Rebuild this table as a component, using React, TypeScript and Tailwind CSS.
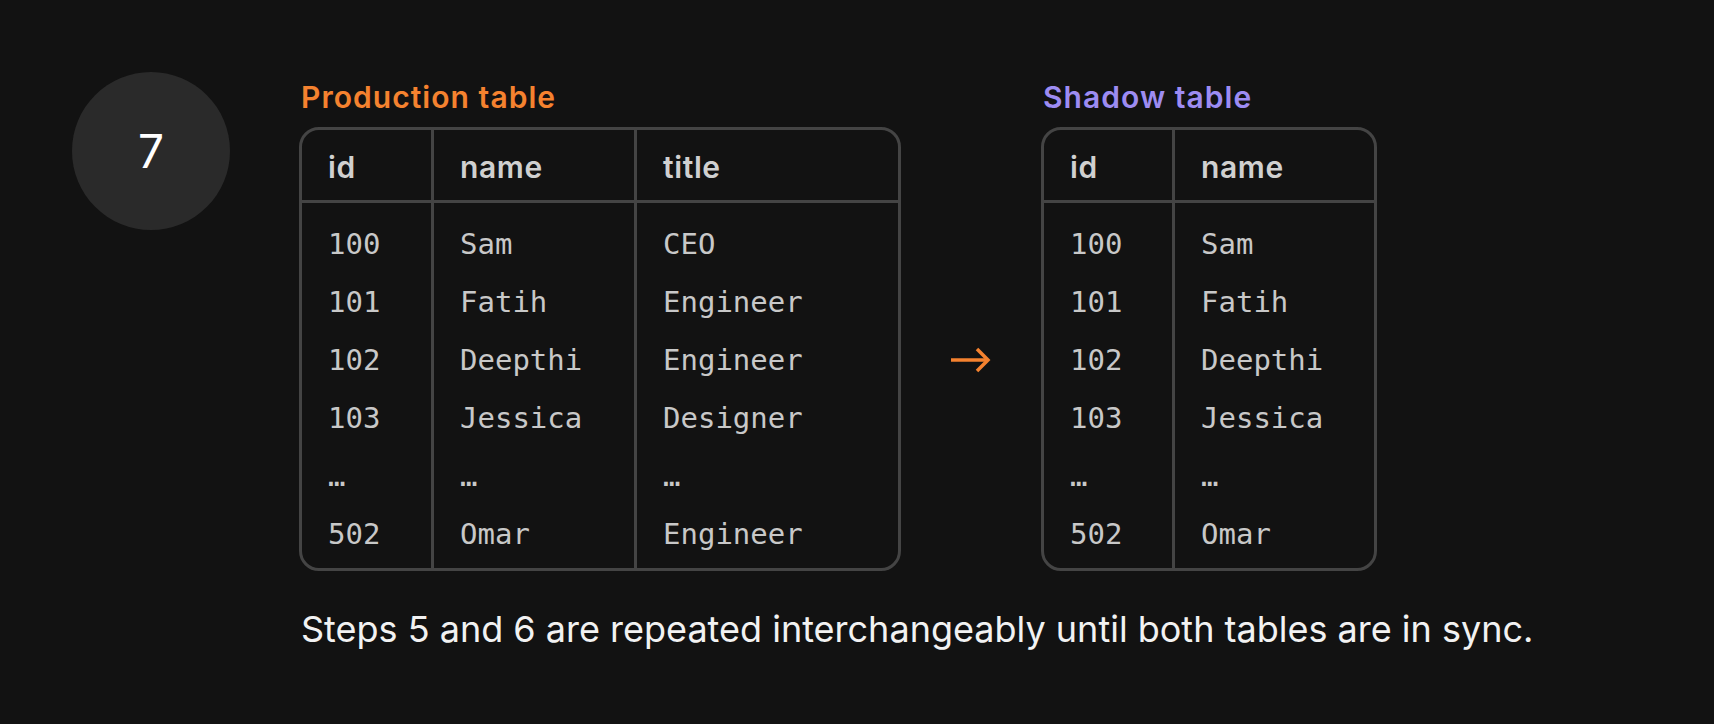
import React from "react";

type Column = {
  key: string;
  width: string;
  cells: string[];
};

const productionColumns: Column[] = [
  { key: "id", width: "w-[132px]", cells: ["100", "101", "102", "103", "…", "502"] },
  { key: "name", width: "w-[203px]", cells: ["Sam", "Fatih", "Deepthi", "Jessica", "…", "Omar"] },
  { key: "title", width: "w-[261px]", cells: ["CEO", "Engineer", "Engineer", "Designer", "…", "Engineer"] },
];

const shadowColumns: Column[] = [
  { key: "id", width: "w-[131px]", cells: ["100", "101", "102", "103", "…", "502"] },
  { key: "name", width: "w-[199px]", cells: ["Sam", "Fatih", "Deepthi", "Jessica", "…", "Omar"] },
];

function DataTable({ label, labelColor, columns }: { label: string; labelColor: string; columns: Column[] }) {
  return (
    <div className="flex flex-col">
      <div
        className={`text-[30px] leading-[34px] font-semibold tracking-[0.035em] pl-[2px] ${labelColor}`}
        style={{ fontFamily: "Inter, 'Noto Sans', sans-serif" }}
      >
        {label}
      </div>
      <div className="mt-[13px] flex border-[3px] border-[#444444] rounded-[20px] overflow-hidden">
        {columns.map((col, i) => (
          <div
            key={col.key}
            className={`${col.width} flex flex-col ${i < columns.length - 1 ? "border-r-[3px] border-[#444444]" : ""}`}
          >
            <div
              className="h-[73px] border-b-[3px] border-[#444444] pt-[19px] pl-[26px] text-[30px] leading-[36px] font-semibold tracking-[0.02em] text-[#d0d0d0]"
              style={{ fontFamily: "Inter, 'Noto Sans', sans-serif" }}
            >
              {col.key}
            </div>
            <div
              className="pt-[12px] pb-[5px] pl-[26px] text-[29px] leading-[58px] text-[#c8c8c8]"
              style={{ fontFamily: "'DejaVu Sans Mono', 'Liberation Mono', monospace" }}
            >
              {col.cells.map((c, j) => (
                <div key={j} className="whitespace-nowrap">
                  {c}
                </div>
              ))}
            </div>
          </div>
        ))}
      </div>
    </div>
  );
}

export default function App() {
  return (
    <div className="min-h-screen w-full bg-[#121212] flex pt-[72px] pl-[72px]">
      {/* Step badge */}
      <div
        className="w-[158px] h-[158px] rounded-full bg-[#2a2a2a] flex items-center justify-center text-[46px] text-white shrink-0"
        style={{ fontFamily: "Inter, 'Noto Sans', sans-serif" }}
      >
        7
      </div>

      <div className="ml-[69px] pt-[8px] flex flex-col">
        <div className="flex items-start">
          <DataTable label="Production table" labelColor="text-[#f5822f]" columns={productionColumns} />

          <div className="w-[140px] flex justify-center pt-[267px]">
            <svg width="40" height="26" viewBox="0 0 40 26" fill="none">
              <path d="M0 13H37" stroke="#f5822f" strokeWidth="3.5" />
              <path d="M26 2L37 13L26 24" stroke="#f5822f" strokeWidth="3.5" />
            </svg>
          </div>

          <DataTable label="Shadow table" labelColor="text-[#9d8cf2]" columns={shadowColumns} />
        </div>

        <p
          className="mt-[38px] text-[36px] leading-[40px] text-[#f2f2f2] pl-[2px] whitespace-nowrap"
          style={{ fontFamily: "Inter, 'Noto Sans', sans-serif" }}
        >
          Steps 5 and 6 are repeated interchangeably until both tables are in sync.
        </p>
      </div>
    </div>
  );
}
